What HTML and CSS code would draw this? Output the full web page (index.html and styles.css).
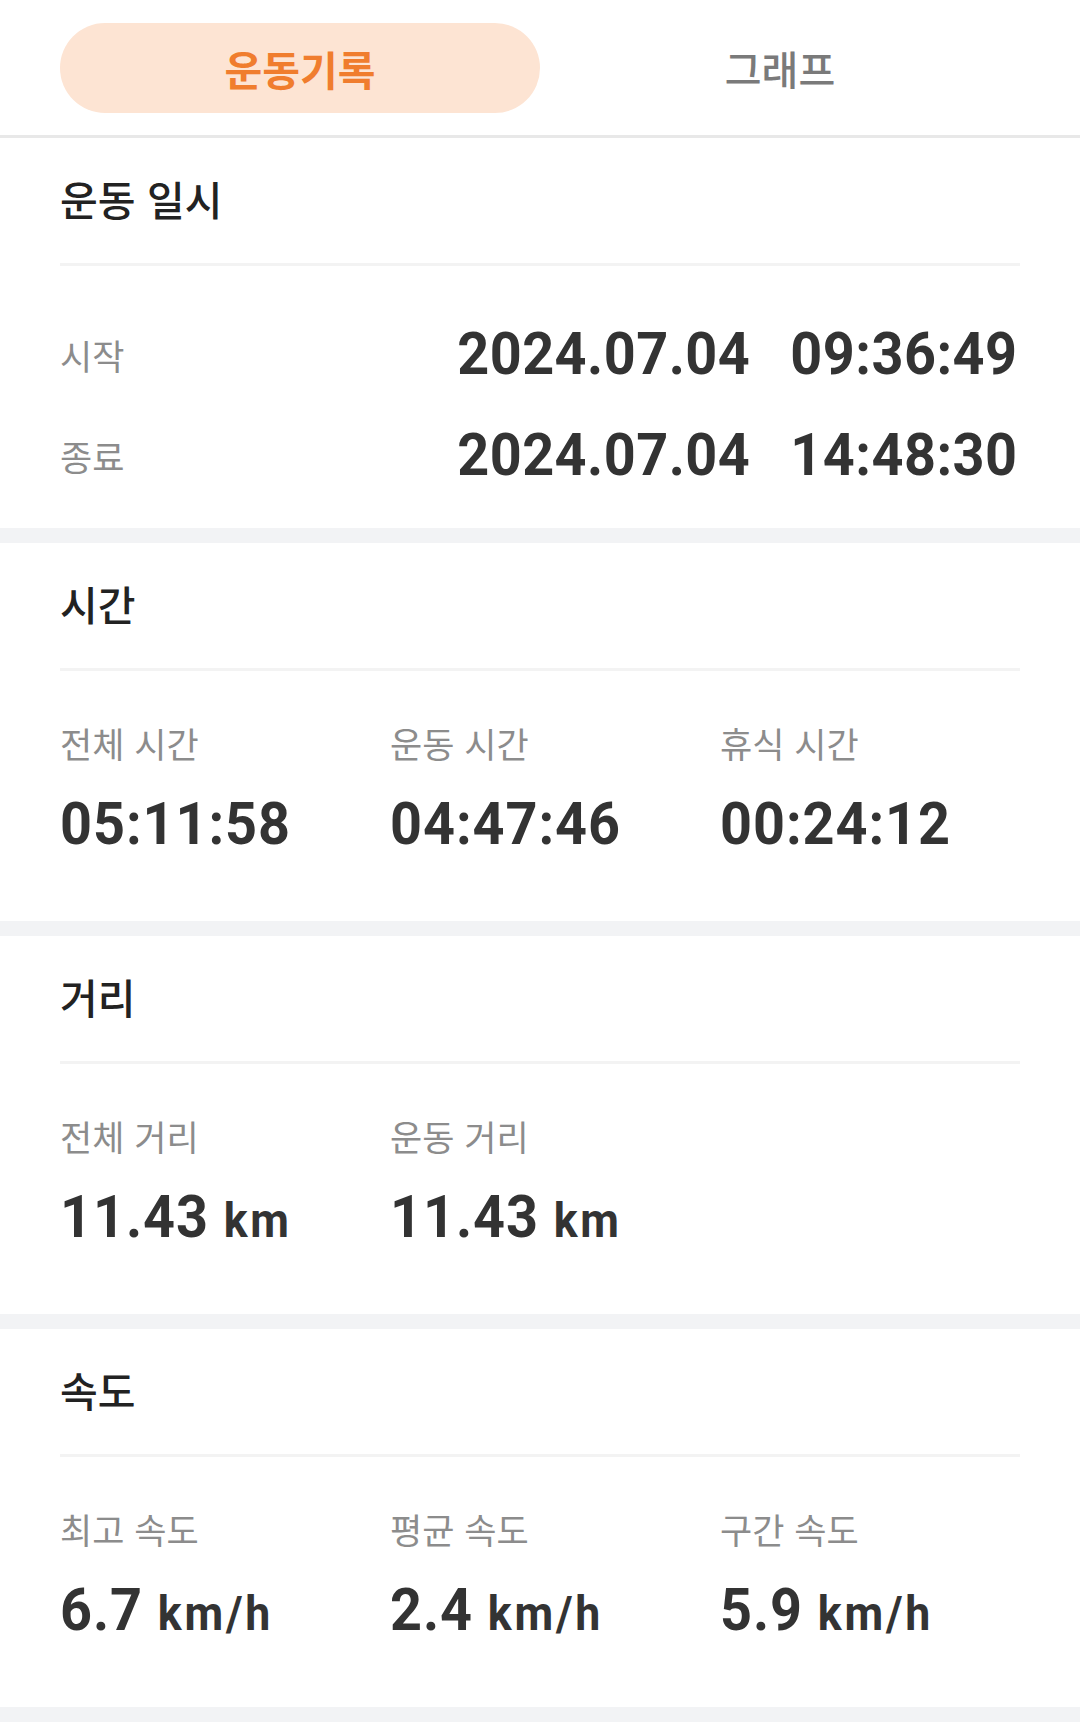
FILE: index.html
```html
<!DOCTYPE html>
<html lang="ko">
<head>
    <meta charset="UTF-8">
    <meta name="viewport" content="width=device-width, initial-scale=1.0">
    <title>운동기록</title>
    <link rel="stylesheet" href="styles.css">
</head>
<body>
    <div class="tabs">
        <div class="tab active">운동기록</div>
        <div class="tab">그래프</div>
    </div>

    <div class="section">
        <div class="section-head">
            <div class="section-title">운동 일시</div>
        </div>
        <div class="dates">
            <div class="date-row">
                <span class="label">시작</span>
                <span class="datetime"><span>2024.07.04</span><span>09:36:49</span></span>
            </div>
            <div class="date-row">
                <span class="label">종료</span>
                <span class="datetime"><span>2024.07.04</span><span>14:48:30</span></span>
            </div>
        </div>
    </div>

    <div class="section">
        <div class="section-head">
            <div class="section-title">시간</div>
        </div>
        <div class="stats">
            <div class="stat">
                <span class="label">전체 시간</span>
                <span class="value">05:11:58</span>
            </div>
            <div class="stat">
                <span class="label">운동 시간</span>
                <span class="value">04:47:46</span>
            </div>
            <div class="stat">
                <span class="label">휴식 시간</span>
                <span class="value">00:24:12</span>
            </div>
        </div>
    </div>

    <div class="section">
        <div class="section-head">
            <div class="section-title">거리</div>
        </div>
        <div class="stats">
            <div class="stat">
                <span class="label">전체 거리</span>
                <span class="value">11.43 <small>km</small></span>
            </div>
            <div class="stat">
                <span class="label">운동 거리</span>
                <span class="value">11.43 <small>km</small></span>
            </div>
        </div>
    </div>

    <div class="section">
        <div class="section-head">
            <div class="section-title">속도</div>
        </div>
        <div class="stats">
            <div class="stat">
                <span class="label">최고 속도</span>
                <span class="value">6.7 <small>km/h</small></span>
            </div>
            <div class="stat">
                <span class="label">평균 속도</span>
                <span class="value">2.4 <small>km/h</small></span>
            </div>
            <div class="stat">
                <span class="label">구간 속도</span>
                <span class="value">5.9 <small>km/h</small></span>
            </div>
        </div>
    </div>
</body>
</html>
```

FILE: styles.css
```css
*{
    margin: 0;
    padding: 0;
    box-sizing: border-box;
}
body{
    background-color: #fff;
    font-family: "Noto Sans CJK KR", "Noto Sans", sans-serif;
    color: #222;
}

/* tab bar */
.tabs{
    display: flex;
    padding: 23px 60px 22px;
    border-bottom: 3px solid #e8e8e8;
}
.tab{
    flex: 1;
    height: 90px;
    border-radius: 45px;
    display: flex;
    align-items: center;
    justify-content: center;
    font-size: 40px;
    font-weight: 500;
    color: #7a7a7a;
}
.tab.active{
    background-color: #fde4d3;
    color: #f07d2e;
    font-size: 41px;
    font-weight: 700;
}

/* sections */
.section{
    padding: 40px 60px 0;
    border-bottom: 15px solid #f2f3f5;
}
.section-head{
    padding-bottom: 44px;
    border-bottom: 3px solid #f3f3f3;
}
.section-title{
    font-size: 41px;
    line-height: 1;
    font-weight: 500;
    color: #222;
}
.label{
    font-size: 35px;
    line-height: 1;
    color: #8c8c8c;
}

/* numbers: narrow bold digits */
.value, .datetime{
    font-family: Roboto, "Liberation Sans", sans-serif;
    font-weight: 700;
    font-size: 60px;
    line-height: 1;
    letter-spacing: 0.5px;
    color: #333;
    transform: scaleX(0.93);
}
.value{
    align-self: flex-start;
    letter-spacing: 1px;
    transform-origin: left center;
}
.value small{
    font-size: 48px;
    letter-spacing: 3px;
}

/* 운동 일시 */
.dates{
    display: flex;
    flex-direction: column;
    gap: 41px;
    padding: 58px 0 43px;
}
.date-row{
    display: flex;
    align-items: center;
    justify-content: space-between;
}
.datetime{
    display: flex;
    gap: 43px;
    transform-origin: right center;
    margin-right: 2px;
}

/* stat grids */
.stats{
    display: grid;
    grid-template-columns: repeat(3, 330px);
    padding: 54px 0 67px;
}
.stat{
    display: flex;
    flex-direction: column;
    gap: 34px;
}
```
